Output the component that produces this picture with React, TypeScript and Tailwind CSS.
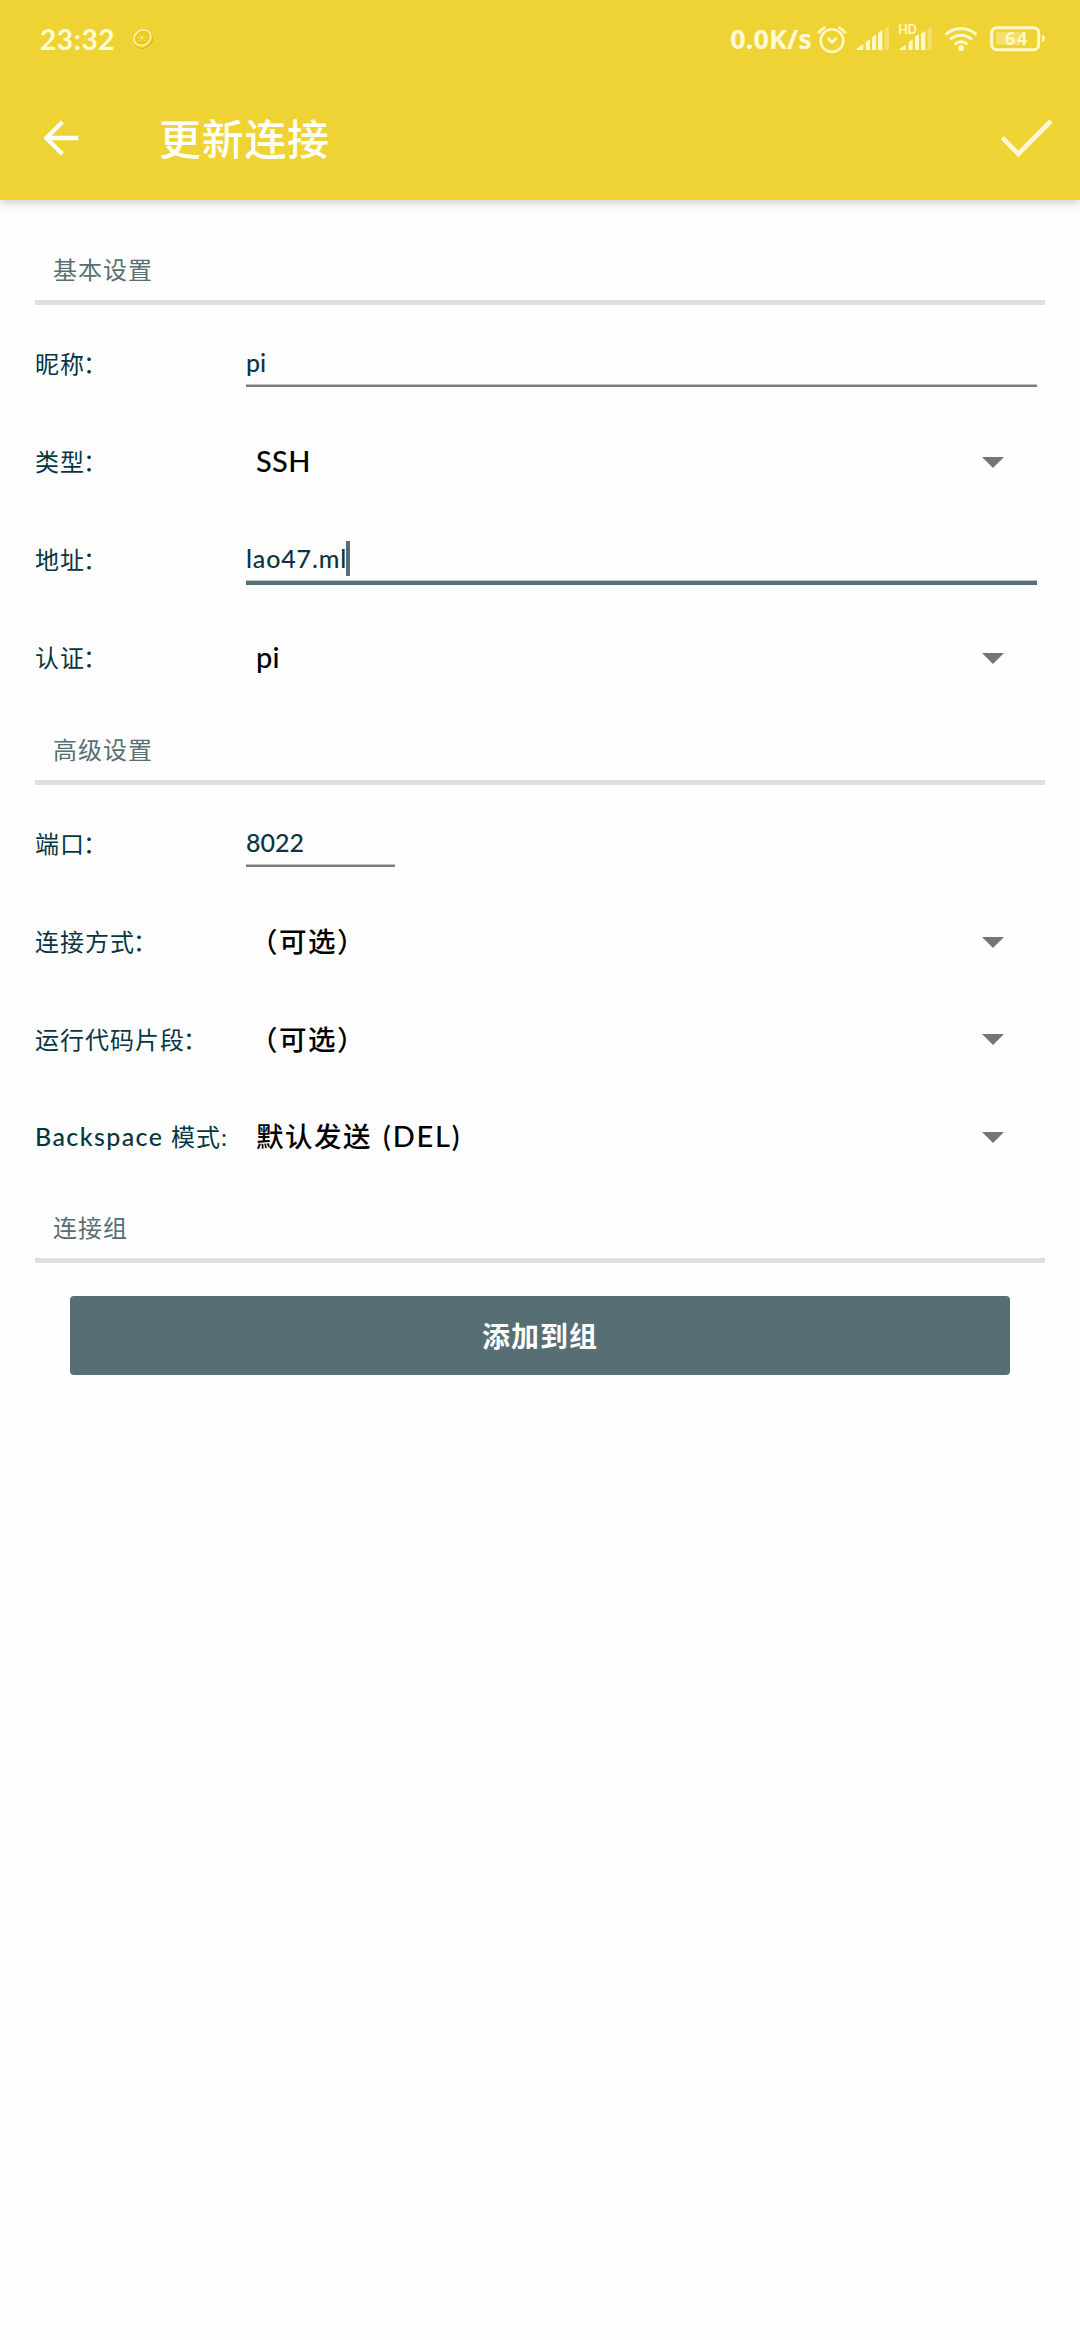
import type { ReactNode } from 'react';

const TINT = '#fff8c9';

function Latin({ children }: { children: ReactNode }) {
  return <span className="font-['Lato','Noto_Sans_CJK_SC',sans-serif]">{children}</span>;
}

function Lemon() {
  return (
    <svg className="ml-[19px] h-5 w-5" viewBox="0 0 60 60" fill="none">
      <ellipse cx="33" cy="34" rx="29" ry="23" transform="rotate(-35 33 34)" fill="#d3a61a" />
      <ellipse cx="31" cy="31" rx="29" ry="24" transform="rotate(-35 31 31)" fill="#f5d536" />
      <ellipse cx="28" cy="26" rx="26" ry="22" transform="rotate(-35 28 26)" fill="#efc91f" stroke="#fff9c4" strokeWidth="4" />
      <path d="M12 26h32M27 26l9-14M27 26l-9 11M27 26l10 10M27 26l-7-11" stroke="#fff5a8" strokeWidth="3" strokeDasharray="4 4" />
    </svg>
  );
}

function Alarm() {
  return (
    <svg className="h-[35px] w-[30px]" viewBox="351 60 90 105" fill="none" stroke={TINT} strokeWidth="7">
      <circle cx="396" cy="119" r="34" />
      <path d="M355 97q8-12 22-18M415 79q14 6 21 18" strokeWidth="8" />
      <path d="M383 111l13 13 14-13" strokeWidth="8" />
    </svg>
  );
}

function Signal() {
  return (
    <svg className="ml-[9px] h-[35px] w-[34px]" viewBox="468 60 102 105" fill={TINT}>
      <path d="M470 147v-4l20-14v18zM497 147v-24l13-9v33zM516 147v-38l12-9v47zM534 147v-51l13-9v60z" />
      <path d="M554 147v-63l13-9v72z" opacity="0.35" />
    </svg>
  );
}

function SignalHd() {
  return (
    <svg className="ml-2 h-[35px] w-[35px]" viewBox="594 60 105 105" fill={TINT}>
      <path d="M600 147v-4l17-12v16zM626 147v-24l12-9v33zM645 147v-40l12-8v48zM663 147v-49l13-9v58z" />
      <path d="M683 147v-63l12-8v71z" opacity="0.35" />
      <text x="595" y="100" fontSize="37" fontFamily="Lato, sans-serif" fontWeight="700" textLength="56">
        HD
      </text>
    </svg>
  );
}

function Wifi() {
  return (
    <svg className="ml-[10px] h-[35px] w-9" viewBox="729 60 108 105" fill="none" stroke={TINT} strokeWidth="9">
      <path d="M737 101a66 66 0 0 1 92 0" />
      <path d="M750 116a48 48 0 0 1 66 0" />
      <path d="M764 130a28 28 0 0 1 38 0" />
      <circle cx="783" cy="141" r="9" fill={TINT} stroke="none" />
    </svg>
  );
}

function Battery() {
  return (
    <svg className="ml-[10px] h-[35px] w-[57px]" viewBox="867 60 171 105">
      <rect x="875" y="80" width="141" height="66" rx="15" fill="none" stroke={TINT} strokeWidth="9" />
      <rect x="888" y="93" width="75" height="39" rx="4" fill={TINT} opacity="0.35" />
      <path d="M1026 101q8 2 8 11t-8 11z" fill={TINT} />
      <text x="915" y="132" fontSize="54" fontFamily="Noto Sans, sans-serif" fontWeight="700" fill={TINT} textLength="67">
        64
      </text>
    </svg>
  );
}

function StatusBar() {
  return (
    <div className="flex h-[77px] items-center pr-[34px] pl-10 text-[#fffbd6]">
      <span className="w-[74px] font-['Lato',sans-serif] text-[28px] leading-none font-bold tracking-[0.6px] whitespace-nowrap">23:32</span>
      <Lemon />
      <span className="ml-auto pr-[5px] font-['Noto_Sans',sans-serif] text-[27px] leading-none font-bold tracking-[0.1px] whitespace-nowrap">0.0K/s</span>
      <Alarm />
      <Signal />
      <SignalHd />
      <Wifi />
      <Battery />
    </div>
  );
}

function Header() {
  return (
    <header className="h-[200px] bg-[#efd334] shadow-[0_2px_10px_rgba(0,0,0,0.22)]">
      <StatusBar />
      <div className="flex h-[123px] items-center pr-[26px] pb-px pl-[43px] text-white">
        <svg className="h-9 w-[38px]" viewBox="132 361 114 108" fill="none" stroke="white" strokeWidth="13">
          <path d="M238 415H143M190 367l-48 48 48 48" />
        </svg>
        <h1 className="ml-[78px] pb-[2px] text-[42px] leading-none font-medium tracking-[0.7px]">更新连接</h1>
        <svg className="ml-auto h-[42px] w-[54px]" viewBox="900 351 162 126" fill="none" stroke="#fff8d6" strokeWidth="14">
          <path d="M907 413l48 49 98-99" />
        </svg>
      </div>
    </header>
  );
}

function Section({ title, className }: { title: string; className: string }) {
  return (
    <div className={`mx-[35px] flex flex-col justify-end border-b-[5px] border-[#e0e0e0] pl-[18px] ${className}`}>
      <h2 className="mb-[19px] text-[24px] leading-6 font-normal tracking-[1px] text-[#586e75]">{title}</h2>
    </div>
  );
}

function Row({ label, children, className = 'h-[98px]' }: { label: ReactNode; children: ReactNode; className?: string }) {
  return (
    <div className={`flex items-center pr-[43px] pl-[35px] ${className}`}>
      <div className="w-[211px] pb-[2px] text-[24px] leading-none tracking-[1px] whitespace-nowrap text-[#073642]">{label}</div>
      {children}
    </div>
  );
}

function Colon() {
  return <span className="-ml-[2px]">：</span>;
}

function Field({ value, focused, className = 'flex-1' }: { value: string; focused?: boolean; className?: string }) {
  return (
    <div className={`flex h-[98px] flex-col ${className}`}>
      <div className="flex h-[69px] items-center pt-[26px]">
        <span
          className={`font-['Lato',sans-serif] text-[25px] leading-none font-medium text-[#073642] ${focused ? 'tracking-[0.85px]' : 'tracking-[0px]'}`}
        >
          {value}
        </span>
        {focused && <span className="-ml-px h-[35px] w-1 bg-[#586e75]" />}
      </div>
      {focused ? (
        <div className="h-[5px] border-t border-[#b8c6c9] bg-[#586e75]" />
      ) : (
        <div className="h-[3px] border-t border-[#c2c2c2] bg-[#7a7a7a]" />
      )}
    </div>
  );
}

function Select({ children, className = '' }: { children: ReactNode; className?: string }) {
  return (
    <div className="flex flex-1 items-center pr-[33px] pl-[10px]">
      <div className={`pb-[2px] text-[27.5px] leading-none font-medium tracking-[1.5px] whitespace-pre text-black ${className}`}>
        {children}
      </div>
      <svg className="ml-auto h-[11px] w-[22px]" viewBox="0 0 22 11">
        <path d="M0 0h22L11 11z" fill="#757575" />
      </svg>
    </div>
  );
}

function LatinValue({ children }: { children: ReactNode }) {
  return (
    <Latin>
      <span className="text-[29px] font-medium tracking-[0.3px]">{children}</span>
    </Latin>
  );
}

export default function App() {
  return (
    <div className="h-[2340px] w-[1080px] overflow-hidden bg-[#fefefe] font-['Noto_Sans_CJK_SC',sans-serif]">
      <Header />
      <main className="flex flex-col">
        <Section title="基本设置" className="h-[105px]" />
        <div className="mt-[10px]">
          <Row label={<>昵称<Colon /></>}><Field value="pi" /></Row>
          <Row label={<>类型<Colon /></>}><Select><LatinValue>SSH</LatinValue></Select></Row>
          <Row label={<>地址<Colon /></>}><Field value="lao47.ml" focused /></Row>
          <Row label={<>认证<Colon /></>}><Select><LatinValue>pi</LatinValue></Select></Row>
        </div>
        <Section title="高级设置" className="h-[78px]" />
        <div className="mt-[10px]">
          <Row label={<>端口<Colon /></>}><Field value="8022" className="w-[149px]" /></Row>
          <Row label={<>连接方式<Colon /></>}><Select className="-ml-[6px]">（可选）</Select></Row>
          <Row label={<>运行代码片段<Colon /></>} className="h-[97px]"><Select className="-ml-[6px]">（可选）</Select></Row>
          <Row label={<><Latin><span className="text-[25px] font-medium tracking-[1.4px]">Backspace </span></Latin>模式<Latin>:</Latin></>}>
            <Select>
              默认发送
              <Latin><span className="ml-[2px] text-[29px] font-medium tracking-[1.8px]"> (DEL)</span></Latin>
            </Select>
          </Row>
        </div>
        <Section title="连接组" className="h-[77px]" />
        <button className="mx-[70px] mt-[33px] h-[79px] rounded-[4px] bg-[#586e75] pb-[2px] text-[28px] leading-none font-bold tracking-[1px] text-white">
          添加到组
        </button>
      </main>
    </div>
  );
}
